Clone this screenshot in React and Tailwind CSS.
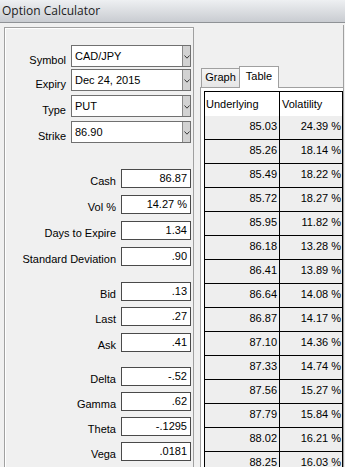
import React from "react";

const combos = [
  { label: "Symbol", value: "CAD/JPY", mt: "mt-[17px]" },
  { label: "Expiry", value: "Dec 24, 2015", mt: "mt-[2px]" },
  { label: "Type", value: "PUT", mt: "mt-[4px]" },
  { label: "Strike", value: "86.90", mt: "mt-[4px]" },
];

const fields = [
  { label: "Cash", value: "86.87", mt: "mt-[26px]" },
  { label: "Vol %", value: "14.27 %", mt: "mt-[7px]" },
  { label: "Days to Expire", value: "1.34", mt: "mt-[7px]" },
  { label: "Standard Deviation", value: ".90", mt: "mt-[7px]" },
  { label: "Bid", value: ".13", mt: "mt-[16px]" },
  { label: "Last", value: ".27", mt: "mt-[6px]" },
  { label: "Ask", value: ".41", mt: "mt-[7px]" },
  { label: "Delta", value: "-.52", mt: "mt-[15px]" },
  { label: "Gamma", value: ".62", mt: "mt-[6px]" },
  { label: "Theta", value: "-.1295", mt: "mt-[6px]" },
  { label: "Vega", value: ".0181", mt: "mt-[6px]" },
];

const rows = [
  ["85.03", "24.39 %"],
  ["85.26", "18.14 %"],
  ["85.49", "18.22 %"],
  ["85.72", "18.27 %"],
  ["85.95", "11.82 %"],
  ["86.18", "13.28 %"],
  ["86.41", "13.89 %"],
  ["86.64", "14.08 %"],
  ["86.87", "14.17 %"],
  ["87.10", "14.36 %"],
  ["87.33", "14.74 %"],
  ["87.56", "15.27 %"],
  ["87.79", "15.84 %"],
  ["88.02", "16.21 %"],
  ["88.25", "16.03 %"],
];

function Chevron() {
  return (
    <svg width="6" height="4" viewBox="0 0 6 4" className="block">
      <polyline points="0.5,0.5 3,3.2 5.5,0.5" fill="none" stroke="#3a3a3a" strokeWidth="1" />
    </svg>
  );
}

function Combo({ label, value, mt }) {
  return (
    <div className={`flex items-end gap-[5px] ${mt}`}>
      <div className="w-[61px] text-right leading-[13px] whitespace-nowrap">{label}</div>
      <div className="flex h-[22px] w-[120px] border border-[#707070] bg-white">
        <div className="flex flex-1 items-center pl-[3px] leading-[13px]">{value}</div>
        <div className="flex w-[8px] items-center justify-center border-l border-[#8a8a8a] bg-[#d2d2d2] pt-[1px]">
          <Chevron />
        </div>
      </div>
    </div>
  );
}

function Field({ label, value, mt }) {
  return (
    <div className={`flex items-end gap-[5px] ${mt}`}>
      <div className="w-[111px] text-right leading-[13px] whitespace-nowrap">{label}</div>
      <div className="flex h-[19px] w-[70px] items-center justify-end border border-[#4a4a4a] bg-white pr-[3px] leading-[13px]">
        {value}
      </div>
    </div>
  );
}

export default function App() {
  return (
    <div
      className="flex h-[467px] w-[345px] flex-col overflow-hidden bg-[#f0f0f0] text-[11px] text-black"
      style={{ fontFamily: '"Liberation Sans", Arial, sans-serif' }}
    >
      <div className="flex h-[23px] shrink-0 items-center border-b border-[#8f9296] bg-gradient-to-b from-[#eef0f2] to-[#c9ccd1] pl-[2px]">
        <span
          className="text-[12px] leading-[16px] text-[#1b1b1b]"
          style={{ fontFamily: '"Open Sans", "Noto Sans", sans-serif' }}
        >
          Option Calculator
        </span>
      </div>
      <div className="flex min-h-0 flex-1">
        <div className="ml-[4px] mt-[4px] flex w-[190px] shrink-0 flex-col border-l border-r border-t border-[#a0a0a0] shadow-[inset_1px_1px_0_#ffffff]">
          {combos.map((c) => (
            <Combo key={c.label} {...c} />
          ))}
          {fields.map((f) => (
            <Field key={f.label} {...f} />
          ))}
        </div>
        <div className="ml-[1px] mr-[2px] mt-[2px] flex flex-1 flex-col border-r border-[#a0a0a0]">
          <div className="mt-[41px] flex h-[21px] items-end pl-[6px]">
            <div className="flex h-[19px] w-[38px] justify-center border-l border-t border-[#a0a0a0] bg-gradient-to-b from-[#f4f4f4] to-[#e6e6e6] pt-[2px] leading-[13px]">
              Graph
            </div>
            <div className="relative z-10 -mb-[1px] flex h-[22px] w-[40px] justify-center border-l border-r border-t border-[#a0a0a0] bg-white pt-[3px] leading-[13px]">
              Table
            </div>
          </div>
          <div className="ml-[5px] flex-1 border-l border-t border-[#a0a0a0] bg-white">
            <div className="relative ml-[3px] mt-[3px] w-[139px] border-l border-r border-t border-black">
              <div className="flex h-[24px] bg-white">
                <div className="flex w-[75px] items-center border-r border-black pl-[1px] leading-[13px]">
                  Underlying
                </div>
                <div className="flex flex-1 items-center pl-[2px] leading-[13px]">Volatility</div>
              </div>
              {rows.map(([u, v]) => (
                <div key={u} className="flex h-[24px] border-b border-black bg-[#eeeeee]">
                  <div className="w-[75px] border-r border-black pr-[2px] pt-[4px] text-right leading-[13px]">{u}</div>
                  <div className="flex-1 pr-[1px] pt-[4px] text-right leading-[13px]">{v}</div>
                </div>
              ))}
            </div>
          </div>
        </div>
      </div>
    </div>
  );
}
